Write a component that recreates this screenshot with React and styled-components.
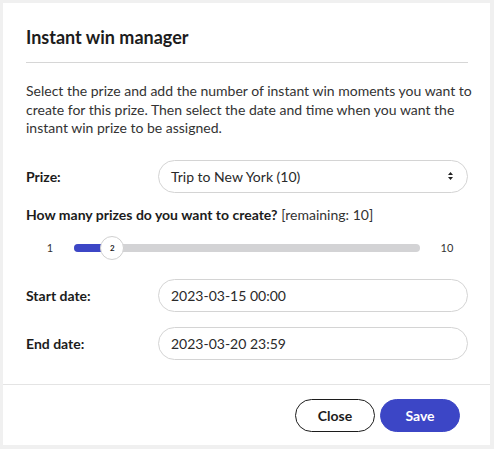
import React from 'react';
import styled, { createGlobalStyle } from 'styled-components';

const Global = createGlobalStyle`
  html, body {
    margin: 0;
    padding: 0;
    background: #f0f0f0;
    font-family: Lato, "Noto Sans", sans-serif;
    color: #222;
  }
`

const Page = styled.div`
  padding: 3px 4px 4px 3px;
  height: 449px;
  box-sizing: border-box;
`

const Modal = styled.div`
  background: white;
  height: 442px;
  display: flex;
  flex-direction: column;
  box-sizing: border-box;
`

const Body = styled.div`
  padding: 22px 22px 0 23px;
  flex: 1;
`

const Title = styled.h2`
  margin: 0;
  font-size: 18px;
  line-height: 24px;
  font-weight: 700;
  color: #1c1c1c;
  padding-bottom: 13px;
  border-bottom: 1px solid #d6d6d6;
`

const Intro = styled.p`
  margin: 19px -8px 22px 0;
  font-size: 14px;
  line-height: 18.5px;
  color: #333;
`

const Row = styled.div`
  display: grid;
  grid-template-columns: 132px 1fr;
  align-items: center;
  margin-bottom: ${({ gap }) => gap || 15}px;
`

const Label = styled.label`
  font-size: 14px;
  font-weight: 700;
  color: #1c1c1c;
`

const Field = styled.div`
  height: 33px;
  border: 1px solid #d4d4d4;
  border-radius: 17px;
  box-sizing: border-box;
  display: flex;
  align-items: center;
  justify-content: space-between;
  padding: 0 13px 0 12px;
  font-size: 14px;
  color: #2a2a2a;
`

const Question = styled.div`
  font-size: 14px;
  font-weight: 700;
  color: #1c1c1c;
  span {
    font-weight: 400;
    color: #333;
    margin-left: 4px;
  }
`

const SliderRow = styled.div`
  display: flex;
  align-items: center;
  height: 30px;
  margin: 10px 0 16px;
  font-size: 11px;
  color: #333;
`

const End = styled.span`
  width: 48px;
  text-align: center;
  padding-left: ${({ pad }) => pad || 0}px;
  box-sizing: border-box;
`

const Track = styled.div`
  flex: 1;
  height: 8px;
  border-radius: 4px;
  background: #d3d3d5;
  position: relative;
`

const Fill = styled.div`
  height: 100%;
  border-radius: 4px 0 0 4px;
  background: #3c46c6;
`

const Thumb = styled.div`
  position: absolute;
  top: 50%;
  width: 24px;
  height: 24px;
  margin: -12px 0 0 -12px;
  border-radius: 50%;
  background: white;
  border: 1px solid #d0d0d0;
  box-sizing: border-box;
  display: flex;
  align-items: center;
  justify-content: center;
  font-size: 8px;
  font-weight: 700;
  color: #222;
`

const Footer = styled.div`
  border-top: 1px solid #e4e4e4;
  height: 60px;
  display: flex;
  justify-content: flex-end;
  align-items: center;
  gap: 5px;
  padding: 0 30px 0 0;
`

const Button = styled.button`
  width: 80px;
  height: 33px;
  border-radius: 17px;
  font-family: inherit;
  font-size: 14px;
  font-weight: 700;
  cursor: pointer;
  background: ${({ primary }) => primary ? '#3c46c6' : 'white'};
  color: ${({ primary }) => primary ? 'white' : '#1c1c1c'};
  border: 1px solid ${({ primary }) => primary ? '#3c46c6' : '#1c1c1c'};
`

const Arrows = () => (
  <svg width="7" height="10" viewBox="0 0 7 10">
    <path d="M3.5 1 L6 4 H1 Z M3.5 9 L6 6 H1 Z" fill="#222" />
  </svg>
)

export default function App() {
  const value = 2
  const pct = ((value - 1) / 9) * 100
  return (
    <Page>
      <Global />
      <Modal>
        <Body>
          <Title>Instant win manager</Title>
          <Intro>
            Select the prize and add the number of instant win moments you want to create for this prize. Then select the date and time when you want the instant win prize to be assigned.
          </Intro>
          <Row gap={13}>
            <Label>Prize:</Label>
            <Field>Trip to New York (10)<Arrows /></Field>
          </Row>
          <Question>How many prizes do you want to create?<span>[remaining: 10]</span></Question>
          <SliderRow>
            <End>1</End>
            <Track>
              <Fill style={{ width: `${pct}%` }} />
              <Thumb style={{ left: `${pct}%` }}>{value}</Thumb>
            </Track>
            <End pad={6}>10</End>
          </SliderRow>
          <Row>
            <Label>Start date:</Label>
            <Field>2023-03-15 00:00</Field>
          </Row>
          <Row>
            <Label>End date:</Label>
            <Field>2023-03-20 23:59</Field>
          </Row>
        </Body>
        <Footer>
          <Button>Close</Button>
          <Button primary>Save</Button>
        </Footer>
      </Modal>
    </Page>
  )
}
